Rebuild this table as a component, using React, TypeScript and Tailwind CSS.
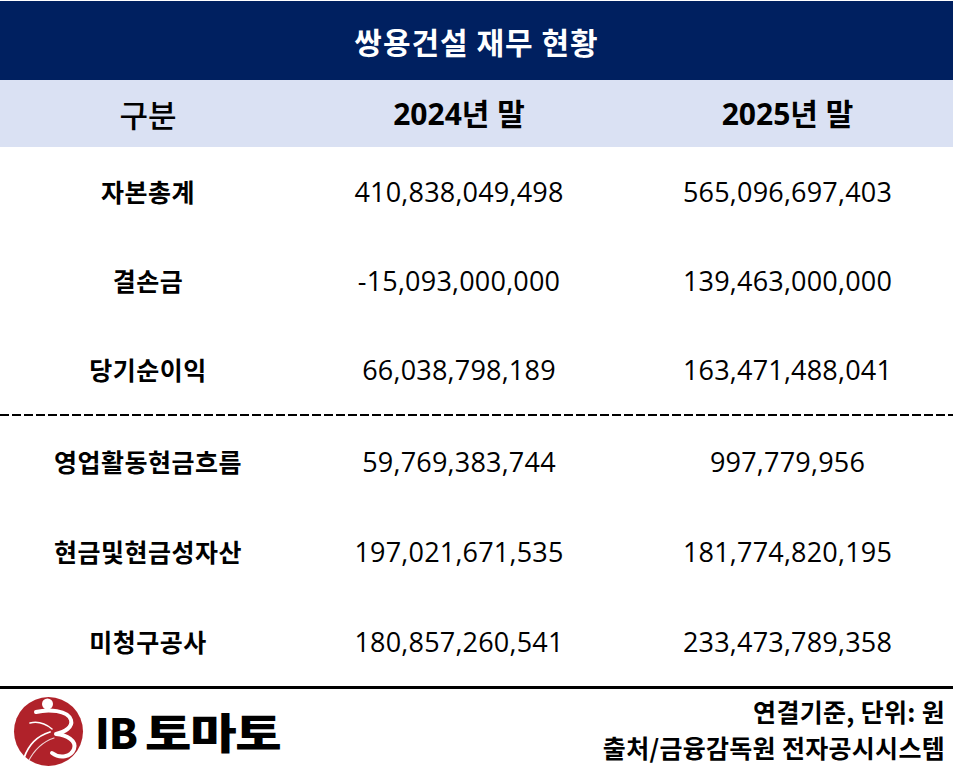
import React from "react";

const KR = "font-['Noto_Sans_CJK_KR',sans-serif]";
const NUM = "font-['Open_Sans','Noto_Sans_CJK_KR',sans-serif]";

type Row = { label: string; a: string; b: string };

const top: Row[] = [
  { label: "자본총계", a: "410,838,049,498", b: "565,096,697,403" },
  { label: "결손금", a: "-15,093,000,000", b: "139,463,000,000" },
  { label: "당기순이익", a: "66,038,798,189", b: "163,471,488,041" },
];
const bottom: Row[] = [
  { label: "영업활동현금흐름", a: "59,769,383,744", b: "997,779,956" },
  { label: "현금및현금성자산", a: "197,021,671,535", b: "181,774,820,195" },
  { label: "미청구공사", a: "180,857,260,541", b: "233,473,789,358" },
];

function DataRow({ r, h }: { r: Row; h: string }) {
  return (
    <div className={`grid grid-cols-[296px_326px_1fr] items-center ${h}`}>
      <div className={`${KR} text-center text-[25px] font-bold leading-none tracking-[0.5px] text-black`}>{r.label}</div>
      <div className={`${NUM} text-center text-[27px] leading-none tracking-[0.2px] text-black`}>{r.a}</div>
      <div className={`${NUM} text-center text-[27px] leading-none tracking-[0.2px] text-black`}>{r.b}</div>
    </div>
  );
}

function Logo() {
  return (
    <svg width="80" height="76" viewBox="0 0 80 76" className="shrink-0">
      <circle cx="38.5" cy="39.5" r="34.5" fill="#B0222A" />
      <circle cx="37.5" cy="12" r="5.5" fill="#fff" />
      <path
        d="M26 20 C38 17 58 18 61 28 C63 35 55 40 46 42 C57 43 67 49 64 57 C61 65 50 67 42 61"
        fill="none"
        stroke="#fff"
        strokeWidth="4"
        strokeLinecap="round"
        strokeLinejoin="round"
      />
      <path d="M20 31 C28 29 36 32 42 37" fill="none" stroke="#fff" strokeWidth="1.6" strokeLinecap="round" />
      <path d="M14 66 C18 54 27 44 40 40" fill="none" stroke="#fff" strokeWidth="1.8" strokeLinecap="round" />
      <path d="M18 70 C24 58 32 50 44 46" fill="none" stroke="#fff" strokeWidth="1.2" strokeLinecap="round" opacity="0.8" />
    </svg>
  );
}

export default function App() {
  return (
    <div className="w-[953px] h-[780px] overflow-hidden bg-white pt-px">
      <div className={`${KR} flex h-[79px] items-center justify-center bg-[#002060] text-[30px] font-bold leading-none tracking-[1px] text-white`}>
        쌍용건설 재무 현황
      </div>
      <div className="grid h-[67px] grid-cols-[296px_326px_1fr] items-center bg-[#DAE1F3]">
        <div className={`${KR} text-center text-[31px] font-medium leading-none text-black`}>구분</div>
        <div className={`${NUM} text-center text-[30px] font-bold leading-none text-black`}>2024년 말</div>
        <div className={`${NUM} text-center text-[30px] font-bold leading-none text-black`}>2025년 말</div>
      </div>
      {top.map((r) => (
        <DataRow key={r.label} r={r} h="h-[89px]" />
      ))}
      <div className="h-[2px] w-full bg-[repeating-linear-gradient(90deg,#000_0px,#000_9px,transparent_9px,transparent_12px)]" />
      {bottom.map((r) => (
        <DataRow key={r.label} r={r} h="h-[90px]" />
      ))}
      <div className="h-[3px] w-full bg-black" />
      <div className="flex items-start justify-between">
        <div className="flex items-center pl-[10px] pt-[3px]">
          <Logo />
          <span className={`${KR} ml-[5px] mt-[2px] text-[42px] font-black leading-none tracking-[-1px] text-black`}>
            IB
          </span>
          <span className={`${KR} ml-[8px] mt-[2px] inline-block origin-left scale-x-[1.2] text-[42px] font-black leading-none tracking-[-1px] text-black`}>
            토마토
          </span>
        </div>
        <div className={`${KR} flex flex-col items-end pr-[8px] pt-[4px] text-[25px] font-bold leading-[36px] tracking-[0.3px] text-black`}>
          <span>연결기준, 단위: 원</span>
          <span>출처/금융감독원 전자공시시스템</span>
        </div>
      </div>
    </div>
  );
}
